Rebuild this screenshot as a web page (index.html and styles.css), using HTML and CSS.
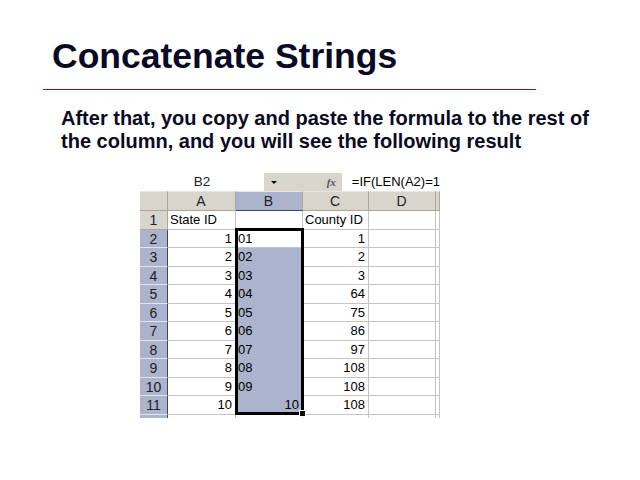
FILE: index.html
```html
<!DOCTYPE html>
<html>
<head>
<meta charset="utf-8">
<link rel="stylesheet" href="styles.css">
</head>
<body>
<div class="slide">
  <h1 class="title">Concatenate Strings</h1>
  <div class="rule"></div>
  <p class="lead">After that, you copy and paste the formula to the rest of<br>the column, and you will see the following result</p>
  <div class="sheet">
    <div class="fbar">
      <div class="namebox">B2</div>
      <div class="fbtns"><span class="arrow"></span><span class="fx">fx</span></div>
      <div class="formula">=IF(LEN(A2)=1</div>
    </div>
    <div class="gridwrap">
      <div class="grid">
        <div class="corner"></div>
        <div class="ch">A</div>
        <div class="ch sel">B</div>
        <div class="ch">C</div>
        <div class="ch">D</div>
        <div class="ch edge"></div>

        <div class="rh">1</div>
        <div class="c">State ID</div>
        <div class="c"></div>
        <div class="c">County ID</div>
        <div class="c"></div>
        <div class="c edge"></div>

        <div class="rh sel">2</div><div class="c n">1</div><div class="c">01</div><div class="c n">1</div><div class="c"></div><div class="c edge"></div>
        <div class="rh sel">3</div><div class="c n">2</div><div class="c b">02</div><div class="c n">2</div><div class="c"></div><div class="c edge"></div>
        <div class="rh sel">4</div><div class="c n">3</div><div class="c b">03</div><div class="c n">3</div><div class="c"></div><div class="c edge"></div>
        <div class="rh sel">5</div><div class="c n">4</div><div class="c b">04</div><div class="c n">64</div><div class="c"></div><div class="c edge"></div>
        <div class="rh sel">6</div><div class="c n">5</div><div class="c b">05</div><div class="c n">75</div><div class="c"></div><div class="c edge"></div>
        <div class="rh sel">7</div><div class="c n">6</div><div class="c b">06</div><div class="c n">86</div><div class="c"></div><div class="c edge"></div>
        <div class="rh sel">8</div><div class="c n">7</div><div class="c b">07</div><div class="c n">97</div><div class="c"></div><div class="c edge"></div>
        <div class="rh sel">9</div><div class="c n">8</div><div class="c b">08</div><div class="c n">108</div><div class="c"></div><div class="c edge"></div>
        <div class="rh sel">10</div><div class="c n">9</div><div class="c b">09</div><div class="c n">108</div><div class="c"></div><div class="c edge"></div>
        <div class="rh sel">11</div><div class="c n">10</div><div class="c b n">10</div><div class="c n">108</div><div class="c"></div><div class="c edge"></div>

        <div class="rh tail"></div><div class="c tail"></div><div class="c tail"></div><div class="c tail"></div><div class="c tail"></div><div class="c tail edge"></div>
      </div>
      <div class="selbox"><span class="handle"></span></div>
    </div>
  </div>
</div>
</body>
</html>
```

FILE: styles.css
```css
html, body {
  margin: 0;
  padding: 0;
  background: #ffffff;
}
.slide {
  width: 640px;
  height: 480px;
  overflow: hidden;
  font-family: "Liberation Sans", Arial, sans-serif;
  color: #0a0a23;
}
.title {
  margin: 0;
  padding: 36px 0 0 52px;
  font-size: 35.5px;
  line-height: 40px;
  font-weight: bold;
}
.rule {
  margin: 13px 0 0 43px;
  width: 493px;
  height: 1px;
  background: #7e1e1e;
}
.lead {
  margin: 0;
  padding: 17px 0 0 61px;
  font-size: 20px;
  line-height: 23px;
  font-weight: bold;
}
.sheet {
  margin: 20px 0 0 140px;
  width: 300px;
  font-size: 13px;
  color: #000;
}
.fbar {
  display: flex;
  height: 18px;
  line-height: 18px;
}
.namebox {
  width: 124px;
  text-align: center;
  color: #222;
  font-size: 13.5px;
}
.fbtns {
  width: 78px;
  background: #d8d5cd;
  display: flex;
  align-items: center;
  justify-content: space-between;
  padding: 0 6px 0 7px;
  box-sizing: border-box;
}
.arrow {
  width: 0;
  height: 0;
  border-left: 3px solid transparent;
  border-right: 3px solid transparent;
  border-top: 3px solid #000;
}
.fx {
  font-family: "Liberation Serif", serif;
  font-style: italic;
  font-weight: bold;
  font-size: 11px;
  color: #555;
}
.formula {
  flex: 1;
  padding-left: 10px;
  white-space: nowrap;
  font-size: 13px;
}
.gridwrap {
  position: relative;
}
.grid {
  display: grid;
  grid-template-columns: 28px 68px 67px 66px 67px 4px;
  grid-template-rows: 20px repeat(11, 18.5px) 3px;
}
.grid > div {
  box-sizing: border-box;
  border-right: 1px solid #c4c4c4;
  border-bottom: 1px solid #c4c4c4;
  line-height: 18px;
  padding: 0 3px 0 2px;
  white-space: nowrap;
  overflow: hidden;
}
.grid > .corner {
  background: #d8d5cd;
  border-right: 1px solid #aaa69c;
  border-bottom: 1px solid #aaa69c;
  border-top: 1px solid #e8e6e0;
}
.grid > .ch {
  background: #d8d5cd;
  text-align: center;
  border-right: 1px solid #aaa69c;
  border-bottom: 1px solid #aaa69c;
  border-top: 1px solid #e8e6e0;
  line-height: 19px;
  font-size: 14px;
  color: #222;
}
.grid > .ch.sel {
  background: #abb3cd;
  border-bottom: 1px solid #3a4670;
}
.grid > .rh {
  background: #d8d5cd;
  text-align: center;
  border-right: 1px solid #aaa69c;
  border-bottom: 1px solid #aaa69c;
  font-size: 14px;
  padding: 0;
  color: #222;
}
.grid > .rh.sel {
  background: #abb3cd;
  border-right: 1px solid #3a4670;
  border-bottom: 1px solid #e2e5ee;
}
.grid > .rh.tail {
  background: #abb3cd;
  border-right: 1px solid #3a4670;
  border-bottom: none;
}
.grid > .c.tail {
  border-bottom: none;
}
.grid > .edge {
  padding: 0;
}
.grid > .n {
  text-align: right;
}
.grid > .b {
  background: #abb3cd;
  border-bottom-color: #abb3cd;
  border-right-color: #abb3cd;
}
.selbox {
  position: absolute;
  left: 95px;
  top: 37px;
  width: 69px;
  height: 187px;
  box-sizing: border-box;
  border: 3px solid #000;
  pointer-events: none;
}
.handle {
  position: absolute;
  right: -5px;
  bottom: -5px;
  width: 5px;
  height: 5px;
  background: #000;
  border: 1px solid #fff;
}
```
